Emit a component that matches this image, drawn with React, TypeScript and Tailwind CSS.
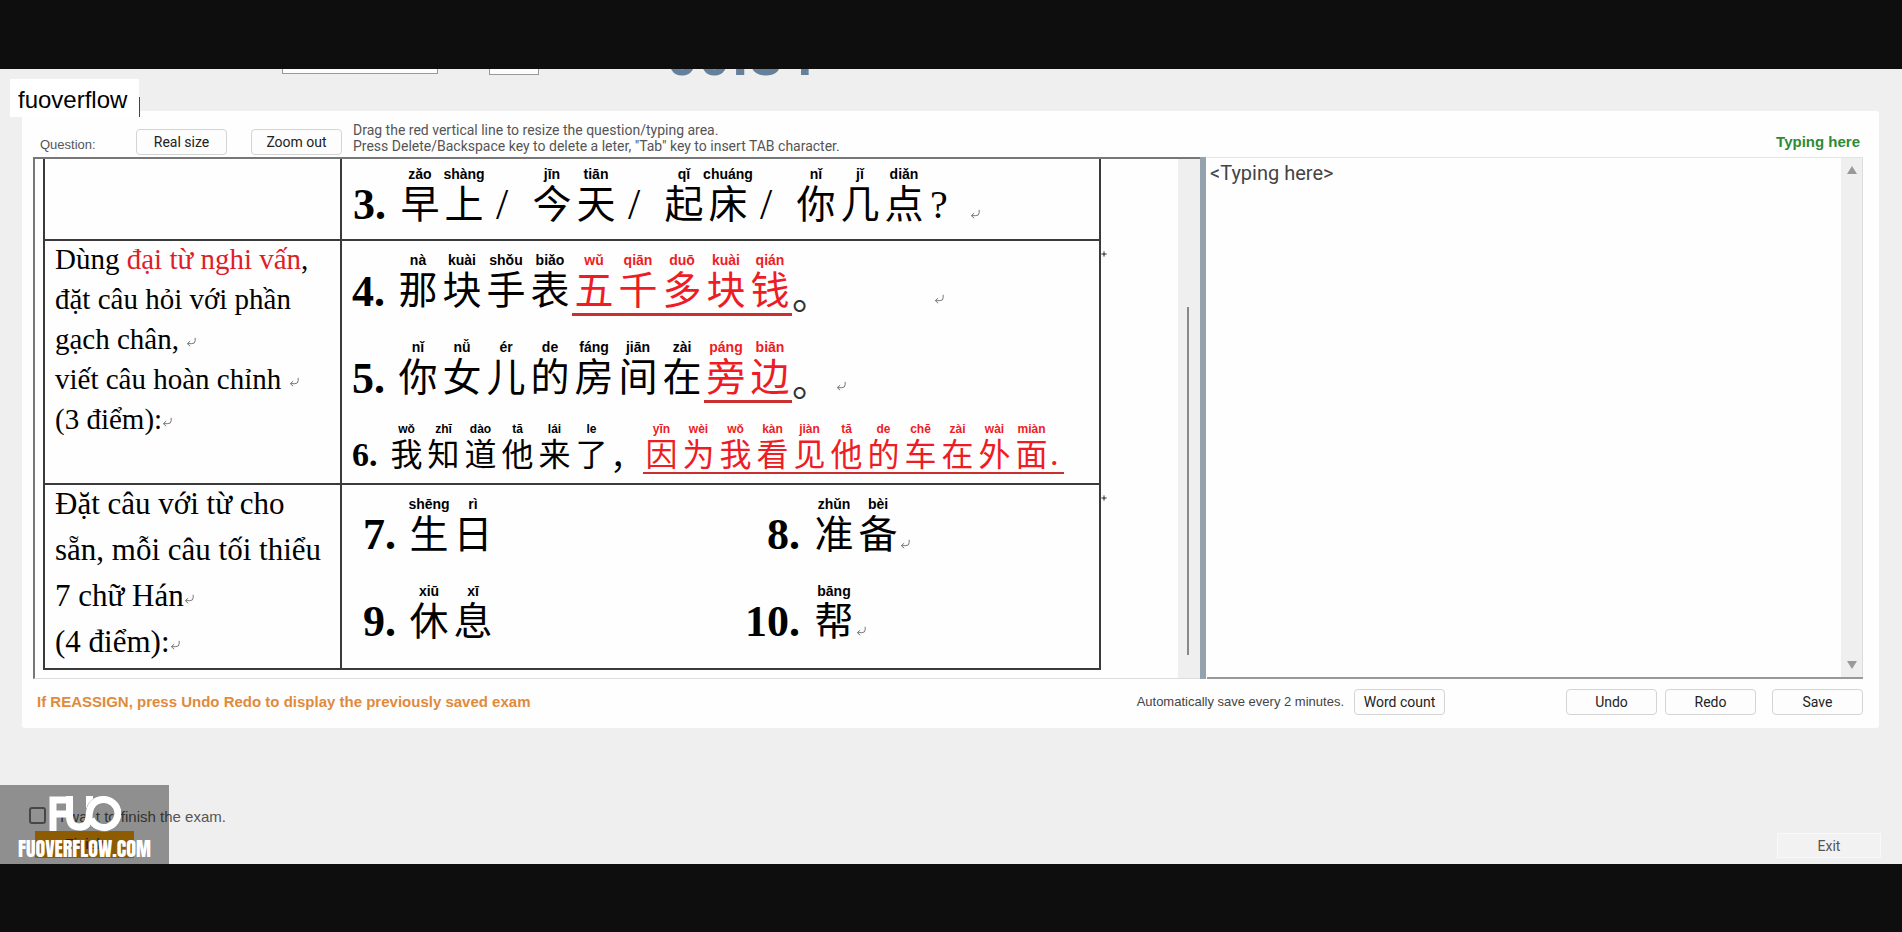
import React from "react";

type Pair = [hanzi: string, pinyin: string];

const timeBlocks: Pair[][] = [
  [["早", "zǎo"], ["上", "shàng"]],
  [["今", "jīn"], ["天", "tiān"]],
  [["起", "qǐ"], ["床", "chuáng"]],
];
const askBlock: Pair[] = [["你", "nǐ"], ["几", "jǐ"], ["点", "diǎn"]];
const watch: Pair[] = [["那", "nà"], ["块", "kuài"], ["手", "shǒu"], ["表", "biǎo"]];
const price: Pair[] = [["五", "wǔ"], ["千", "qiān"], ["多", "duō"], ["块", "kuài"], ["钱", "qián"]];
const room: Pair[] = [
  ["你", "nǐ"], ["女", "nǚ"], ["儿", "ér"], ["的", "de"], ["房", "fáng"], ["间", "jiān"], ["在", "zài"],
];
const beside: Pair[] = [["旁", "páng"], ["边", "biān"]];
const know: Pair[] = [["我", "wǒ"], ["知", "zhī"], ["道", "dào"], ["他", "tā"], ["来", "lái"], ["了", "le"]];
const because: Pair[] = [
  ["因", "yīn"], ["为", "wèi"], ["我", "wǒ"], ["看", "kàn"], ["见", "jiàn"], ["他", "tā"],
  ["的", "de"], ["车", "chē"], ["在", "zài"], ["外", "wài"], ["面", "miàn"],
];

const HAN = "font-['KaiTi','AR_PL_UKai_CN','Noto_Sans_CJK_SC',sans-serif]";

function Mark({ className = "" }: { className?: string }) {
  return (
    <svg viewBox="0 0 12 12" className={"inline-block size-2.5 shrink-0 text-[#777] " + className} aria-hidden="true">
      <path d="M11 1v3.500Q11 8 7 8H2M5 5 1.500 8 5 11" fill="none" stroke="currentColor" strokeWidth="1.200" />
    </svg>
  );
}

function Diamond() {
  return (
    <svg viewBox="0 0 8 8" className="size-1.5 text-[#555]" aria-hidden="true">
      <path d="M4 0v8M0 4h8" stroke="currentColor" strokeWidth="1" />
      <path d="M4 1.500 6.500 4 4 6.500 1.500 4Z" fill="currentColor" />
    </svg>
  );
}

function Words({ pairs, small = false }: { pairs: Pair[]; small?: boolean }) {
  return (
    <>
      {pairs.map(([h, p], i) => (
        <span key={i} className={small ? "flex w-[37px] flex-col items-center" : "flex w-11 flex-col items-center"}>
          <span
            className={
              small
                ? "whitespace-nowrap font-['Liberation_Sans',sans-serif] text-[12px] font-bold leading-4"
                : "whitespace-nowrap font-['Liberation_Sans',sans-serif] text-[14px] font-bold leading-[18px]"
            }
          >
            {p}
          </span>
          <span className={HAN + (small ? " pb-1 text-[32px] leading-[31px]" : " pb-1.5 text-[39px] leading-[37px]")}>
            {h}
          </span>
        </span>
      ))}
    </>
  );
}

function Num({ children, className = "" }: { children: React.ReactNode; className?: string }) {
  return <span className={"self-end text-[44px] font-bold leading-[44px] " + className}>{children}</span>;
}

function Slash() {
  return <span className="w-11 self-end pl-2.5 text-[44px] leading-[44px]">/</span>;
}

function Btn({ children }: { children: React.ReactNode }) {
  return (
    <button className="h-[26px] w-[91px] rounded-[4px] border border-[#d4d4d4] bg-[#fdfdfd] font-['Roboto',sans-serif] text-[14px] leading-4 text-[#222]">
      {children}
    </button>
  );
}

function QuestionTable() {
  return (
    <table className="-mt-px w-[1058px] table-fixed border-collapse text-black">
      <colgroup>
        <col className="w-[297px]" />
        <col />
      </colgroup>
      <tbody>
        <tr className="h-[82px]">
          <td className="border-2 border-t-0 border-[#3a3a3a]" />
          <td className="border-2 border-t-0 border-[#3a3a3a] pl-[11px] pt-[7px] align-top">
            <div className="flex h-[62px]">
              <Num className="w-[45px]">3.</Num>
              {timeBlocks.map((b, i) => (
                <React.Fragment key={i}>
                  <Words pairs={b} />
                  <Slash />
                </React.Fragment>
              ))}
              <Words pairs={askBlock} />
              <span className="w-11 self-end pl-1 text-[40px] leading-[44px]">?</span>
              <Mark className="mb-2 self-end" />
            </div>
          </td>
        </tr>
        <tr className="h-[244px]">
          <td className="border-2 border-[#3a3a3a] pl-2.5 align-top text-[29px] leading-10">
            <div className="-mt-0.5">
              <p>
                Dùng <span className="text-[#dd1f2a]">đại từ nghi vấn</span>,
              </p>
              <p>đặt câu hỏi với phần</p>
              <p>
                gạch chân, <Mark />
              </p>
              <p>
                viết câu hoàn chỉnh <Mark />
              </p>
              <p>
                (3 điểm):
                <Mark />
              </p>
            </div>
          </td>
          <td className="relative border-2 border-[#3a3a3a] pl-2.5 pt-2.5 align-top">
            <span className="absolute -right-2 top-2.5">
              <Diamond />
            </span>
            <div className="flex h-[65px]">
              <Num className="mb-0.5 w-11">4.</Num>
              <Words pairs={watch} />
              <span className="flex border-b-[3px] border-[#c9302f] text-[#ee1c24]">
                <Words pairs={price} />
              </span>
              <span className={HAN + " w-[142px] self-end text-[39px] leading-[47px] text-[#333]"}>。</span>
              <Mark className="mb-3 self-end" />
            </div>
            <div className="mt-[22px] flex h-[65px]">
              <Num className="mb-0.5 w-11">5.</Num>
              <Words pairs={room} />
              <span className="flex border-b-[3px] border-[#c9302f] text-[#ee1c24]">
                <Words pairs={beside} />
              </span>
              <span className={HAN + " w-11 self-end text-[39px] leading-[47px] text-[#333]"}>。</span>
              <Mark className="mb-3 self-end" />
            </div>
            <div className="mt-[18px] flex h-[53px]">
              <span className="w-9 self-end text-[34px] font-bold leading-[38px]">6.</span>
              <Words pairs={know} small />
              <span className={HAN + " w-[33px] self-end text-[33px] leading-[37px]"}>，</span>
              <span className="flex border-b-2 border-[#c9302f] text-[#ee1c24]">
                <Words pairs={because} small />
                <span className="w-3.5 self-end text-[34px] leading-[36px]">.</span>
              </span>
            </div>
          </td>
        </tr>
        <tr className="h-[185px]">
          <td className="border-2 border-[#3a3a3a] pl-2.5 align-top text-[31px] leading-[46px]">
            <div className="-mt-1">
              <p>Đặt câu với từ cho</p>
              <p>sẵn, mỗi câu tối thiểu</p>
              <p>
                7 chữ Hán
                <Mark />
              </p>
              <p>
                (4 điểm):
                <Mark />
              </p>
            </div>
          </td>
          <td className="relative border-2 border-[#3a3a3a] pl-[21px] pt-2.5 align-top">
            <span className="absolute -right-2 top-2.5">
              <Diamond />
            </span>
            <div className="grid grid-cols-[377px_1fr] gap-y-[25px]">
              <div className="flex h-[62px]">
                <Num className="w-11">7.</Num>
                <Words pairs={[["生", "shēng"], ["日", "rì"]]} />
              </div>
              <div className="flex h-[62px]">
                <Num className="mr-3 w-[60px] text-right">8.</Num>
                <Words pairs={[["准", "zhǔn"], ["备", "bèi"]]} />
                <Mark className="mb-2 self-end" />
              </div>
              <div className="flex h-[62px]">
                <Num className="w-11">9.</Num>
                <Words pairs={[["休", "xiū"], ["息", "xī"]]} />
              </div>
              <div className="flex h-[62px]">
                <Num className="mr-3 w-[60px] text-right">10.</Num>
                <Words pairs={[["帮", "bāng"]]} />
                <Mark className="mb-2 self-end" />
              </div>
            </div>
          </td>
        </tr>
      </tbody>
    </table>
  );
}

function Logo() {
  return (
    <svg viewBox="0 0 72 36" className="h-9 w-[72px]" role="img" aria-label="FUO">
      <path d="M4 35V4H17M4 18H17" fill="none" stroke="#fff" strokeWidth="7" />
      <path d="M20.500 0V20Q20.500 31 30.500 31Q40 31 40.500 20" fill="none" stroke="#fff" strokeWidth="7" />
      <path d="M40.500 0V12" fill="none" stroke="#fff" strokeWidth="7" />
      <circle cx="55" cy="17.500" r="14" fill="none" stroke="#8b8b8b" strokeWidth="9" />
      <path
        d="M30.500 31Q39 31 40 21Q40.500 3.500 55 3.500A14 14 0 1 1 42 23"
        fill="none"
        stroke="#fff"
        strokeWidth="7"
      />
    </svg>
  );
}

export default function App() {
  return (
    <div className="min-h-screen bg-[#0e0e0e] py-[69px] font-['Liberation_Sans',sans-serif]">
      <main className="relative flex h-[calc(100vh-137px)] min-h-[795px] flex-col overflow-hidden bg-[#efefef]">
        <header className="flex h-[42px] shrink-0 items-start overflow-hidden pl-[282px]">
          <select
            aria-label="Subject"
            className="-mt-5 h-[25px] w-[156px] border border-[#999] bg-[#fdfdfd]"
          />
          <select
            aria-label="Font size"
            className="-mt-5 ml-[51px] h-[26px] w-[50px] border border-[#999] bg-[#fdfdfd]"
          />
          <div className="-mt-11 ml-[127px] text-[58px] font-bold leading-[60px] text-[#64809a]">00:34</div>
        </header>

        <section className="ml-[22px] mr-[23px] flex flex-col rounded-[3px] bg-[#fefefe] pl-[11px] pr-4">
          <div className="flex h-[46px] text-[#555]">
            <span className="w-[103px] pl-[7px] pt-[26px] text-[13px] leading-4">Question:</span>
            <div className="flex w-[217px] gap-6 pt-[18px]">
              <Btn>Real size</Btn>
              <Btn>Zoom out</Btn>
            </div>
            <p className="flex-1 pt-[11px] font-['Roboto',sans-serif] text-[14px] leading-4">
              Drag the red vertical line to resize the question/typing area.
              <br />
              Press Delete/Backspace key to delete a leter, &quot;Tab&quot; key to insert TAB character.
            </p>
            <label htmlFor="answer" className="pr-[3px] pt-[23px] text-[15px] font-bold leading-4 text-[#2f8a35]">
              Typing here
            </label>
          </div>

          <div className="grid h-[522px] grid-cols-[1167fr_6px_657fr]">
            <div className="flex justify-between overflow-hidden border-b border-l-2 border-t-2 border-b-[#ddd] border-l-[#777] border-t-[#777]">
              <div className="pl-2 font-['Liberation_Serif','Noto_Sans_CJK_SC',serif]">
                <QuestionTable />
              </div>
              <div className="w-[22px] bg-[#efefef] pl-[9px] pt-[148px]">
                <div className="h-[348px] w-0.5 bg-[#888]" />
              </div>
            </div>
            <div className="bg-[#94a2ae]" />
            <div className="ml-px flex border-b-2 border-t border-b-[#999] border-t-[#e4e4e4]">
              <textarea
                id="answer"
                defaultValue="<Typing here>"
                className="flex-1 resize-none bg-transparent pl-[3px] pt-px font-['Roboto',sans-serif] text-[20px] leading-7 text-[#444] outline-none"
              />
              <div className="flex w-[22px] flex-col items-center justify-between border-r border-[#ddd] bg-[#efefef] py-2">
                <svg viewBox="0 0 10 8" className="h-2 w-2.5" aria-hidden="true">
                  <path d="M5 0 10 8H0Z" fill="#999" />
                </svg>
                <svg viewBox="0 0 10 8" className="h-2 w-2.5" aria-hidden="true">
                  <path d="M5 8 10 0H0Z" fill="#999" />
                </svg>
              </div>
            </div>
          </div>

          <div className="flex h-[49px] items-center pb-1">
            <p className="flex-1 pl-1 text-[15px] font-bold leading-4 text-[#e08a3c]">
              If REASSIGN, press Undo Redo to display the previously saved exam
            </p>
            <p className="pr-[10px] text-[13px] leading-4 text-[#444]">Automatically save every 2 minutes.</p>
            <Btn>Word count</Btn>
            <div className="ml-[121px] flex gap-2">
              <Btn>Undo</Btn>
              <Btn>Redo</Btn>
            </div>
            <div className="ml-4 flex">
              <Btn>Save</Btn>
            </div>
          </div>
        </section>

        <footer className="mt-auto flex items-end justify-between pb-1.5 pl-[29px] pr-[21px]">
          <div>
            <label className="flex items-center gap-3.5 text-[15px] leading-5 text-[#555]">
              <input
                type="checkbox"
                className="size-[17px] appearance-none rounded-[3px] border-2 border-[#777] bg-[#f4f4f4]"
              />
              <span className="pt-1">I want to finish the exam.</span>
            </label>
            <button className="ml-1.5 mt-1 h-[27px] w-[99px] bg-[#eb9800] text-[15px] text-[#333]">Finish</button>
          </div>
          <button className="h-[25px] w-[104px] border border-[#f8f8f8] bg-[#f2f2f2] font-['Roboto',sans-serif] text-[14px] leading-4 text-[#555]">
            Exit
          </button>
        </footer>

        <div className="absolute left-2.5 top-2.5 flex h-[38px] items-end">
          <span className="flex h-full w-[129px] items-center bg-white pl-2 pt-1 text-[24px] leading-7 text-black">
            fuoverflow
          </span>
          <span className="h-5 w-px bg-[#444]" />
        </div>

        <div className="absolute bottom-0 left-0 flex h-[79px] w-[169px] flex-col items-center bg-black/40 pt-[11px]">
          <Logo />
          <span className="mt-[7px] font-['Impact','Anton','Roboto_Condensed','Liberation_Sans_Narrow','Liberation_Sans',sans-serif] text-[20px] leading-5 text-white">
            FUOVERFLOW.COM
          </span>
        </div>
      </main>
    </div>
  );
}
